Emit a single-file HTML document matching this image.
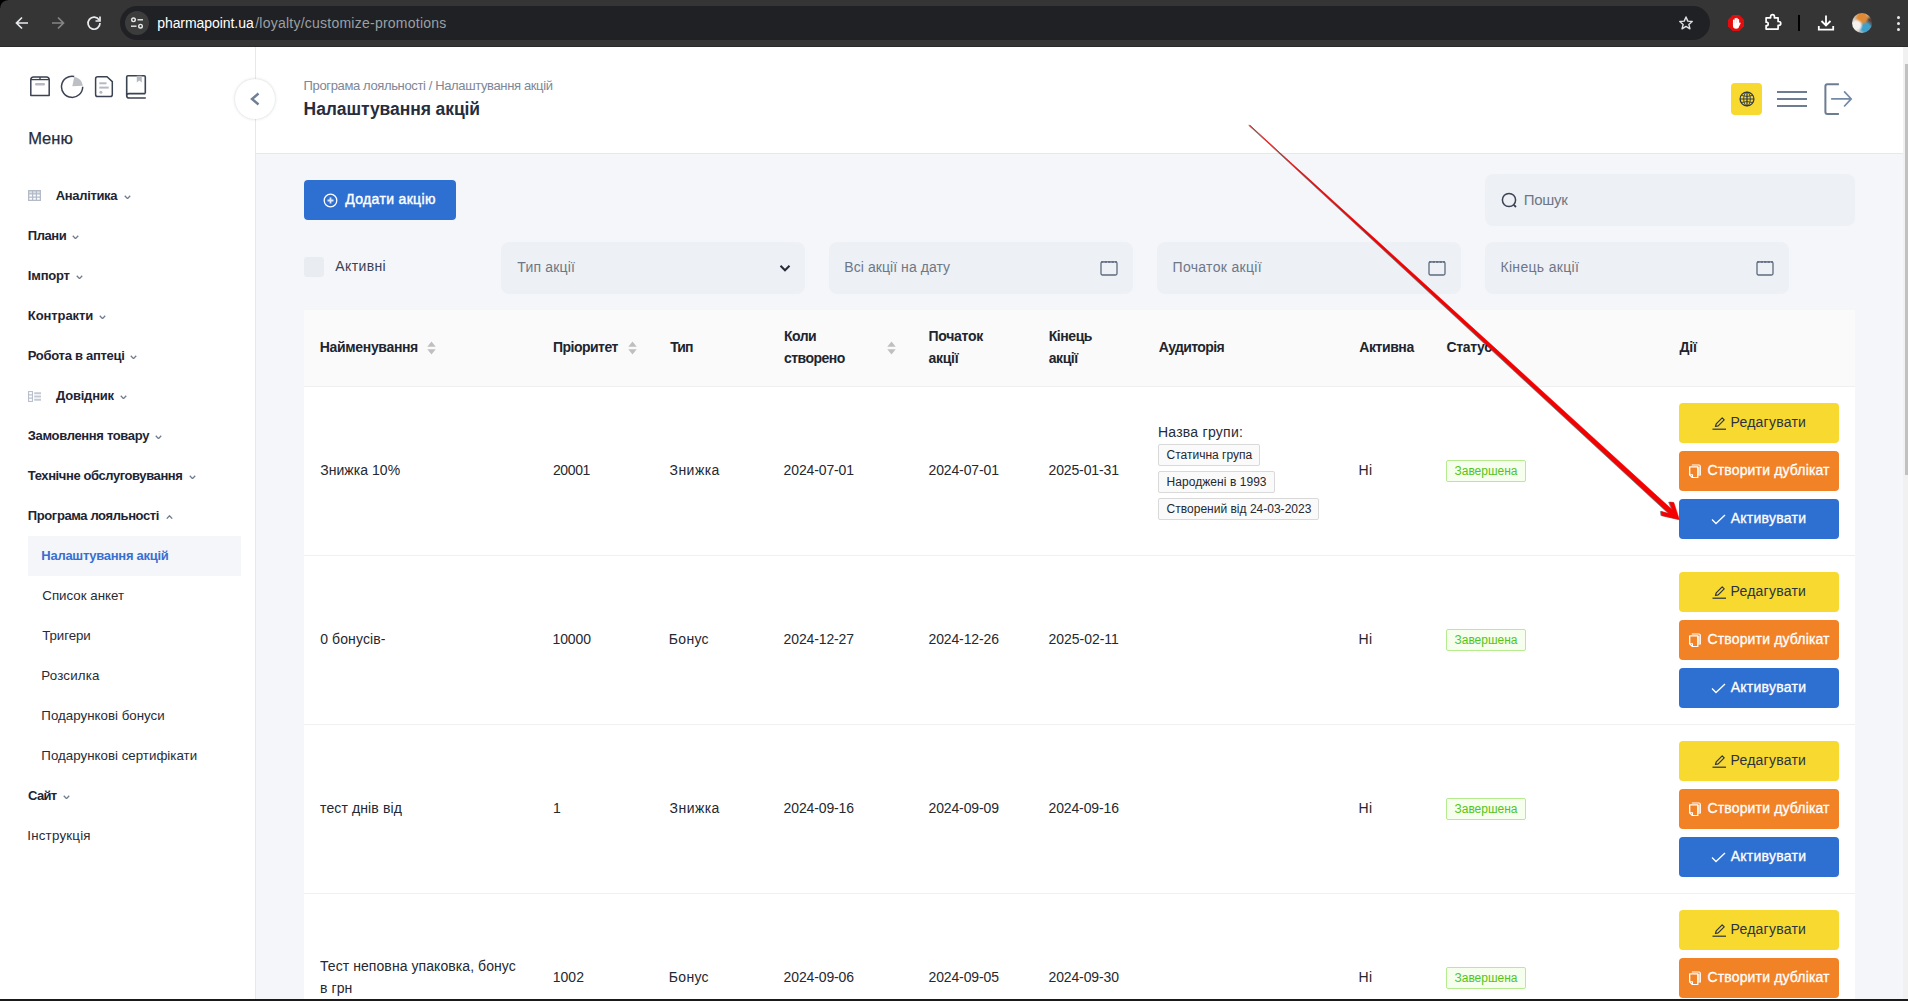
<!DOCTYPE html><html lang="uk"><head><meta charset="utf-8"><title>Налаштування акцій</title><style>
*{box-sizing:border-box;margin:0;padding:0}
html,body{width:1908px;height:1001px;overflow:hidden;background:#f5f6fa;font-family:"Liberation Sans",sans-serif;color:#262b36}
.abs{position:absolute}
.t{position:absolute;white-space:nowrap;line-height:1}
#chrome{position:absolute;left:0;top:0;width:1908px;height:47px;background:#353535;border-bottom:1px solid #2a2a2a}
#pill{position:absolute;left:120px;top:6px;width:1590px;height:34px;border-radius:17px;background:#202124}
#side{position:absolute;left:0;top:47px;width:256px;height:954px;background:#fff;border-right:1px solid #e4e9f0}
#head{position:absolute;left:256px;top:47px;width:1647px;height:107px;background:#fff;border-bottom:1px solid #e4e9f0}
.mi{position:absolute;font-size:13px;font-weight:700;color:#1e2433;white-space:nowrap;line-height:16px;height:16px}
.sub{position:absolute;left:42px;font-size:13.3px;color:#262b36;white-space:nowrap;line-height:16px}
.inp{position:absolute;height:52px;border-radius:8px;background:#edf0f5}
.inp .ph{position:absolute;left:16px;top:17px;font-size:14px;line-height:16px;color:#6e7787;white-space:nowrap}
.cal{position:absolute;right:15px;top:17.500px}
.th{position:absolute;font-size:14px;font-weight:700;color:#20252f;line-height:22px;white-space:nowrap}
.row{position:absolute;left:304px;width:1551px;height:169px;background:#fff;border-bottom:1px solid #f0f0f0}
.c{position:absolute;top:0;height:166px;display:flex;align-items:center;font-size:14px;color:#25282f;line-height:22px;white-space:nowrap}
.btn{position:absolute;left:1375px;width:160px;height:40px;border-radius:4px;font-size:14px;line-height:16px;white-space:nowrap}
.btn svg{position:absolute}
.btn span{position:absolute;top:11px}
.by{background:#f8d930;color:#2b3240}
.bo{background:#f28226;color:#fff;-webkit-text-stroke:.3px #fff}
.bb{background:#2e70d2;color:#fff;-webkit-text-stroke:.3px #fff}
.tag{position:absolute;height:22px;border:1px solid #d9d9d9;border-radius:2px;background:#fafafa;font-size:12px;line-height:20px;padding:0 7px;color:#25282f;white-space:nowrap}
.st{height:22px;border:1px solid #b7eb8f;background:#f6ffed;color:#52c41a;font-size:12px;line-height:20px;padding:0 7px;border-radius:2px;margin-top:2px}
</style></head><body>
<div id="chrome">
<div id="pill"></div>
<div class="abs" style="left:0;top:0;width:8px;height:8px;background:radial-gradient(circle at 8px 8px,rgba(0,0,0,0) 7.200px,#000 8.200px)"></div>
<svg class="abs" style="left:14px;top:15px" width="16" height="16" viewBox="0 0 16 16"><path d="M14 8H3M8 2.500L2.5 8L8 13.5" fill="none" stroke="#e8eaed" stroke-width="1.7"/></svg>
<svg class="abs" style="left:50px;top:15px" width="16" height="16" viewBox="0 0 16 16"><path d="M2 8H13M8 2.500L13.5 8L8 13.5" fill="none" stroke="#858585" stroke-width="1.7"/></svg>
<svg class="abs" style="left:86px;top:15px" width="16" height="16" viewBox="0 0 16 16"><path d="M13.2 5.200A6 6 0 1 0 14 8" fill="none" stroke="#e8eaed" stroke-width="1.7"/><path d="M14 1.500V6H9.5" fill="none" stroke="#e8eaed" stroke-width="1.7"/></svg>
<div class="abs" style="left:125px;top:11px;width:24px;height:24px;border-radius:12px;background:#3c3c3c"></div>
<svg class="abs" style="left:130px;top:16px" width="14" height="14" viewBox="0 0 14 14"><g fill="none" stroke="#e8eaed" stroke-width="1.4"><circle cx="3.5" cy="3.8" r="1.8"/><path d="M7.5 3.800H13"/><circle cx="10.5" cy="10.2" r="1.8"/><path d="M1 10.200H6.5"/></g></svg>
<div class="t" style="left:157px;top:16px;font-size:14px;color:#9aa0a6"><span id="u1" style="letter-spacing:-0.062px;margin-left:0.20px;color:#fff;">pharmapoint.ua</span><span id="u2" style="letter-spacing:0.239px;margin-left:1.60px;">/loyalty/customize-promotions</span></div>
<svg class="abs" style="left:1678px;top:15px" width="16" height="16" viewBox="0 0 18 18"><path d="M9 2.200l2 4.7 5 .4-3.8 3.3 1.2 4.900L9 12.900l-4.4 2.6 1.2-4.900L2 7.300l5-.4z" fill="none" stroke="#dfe1e5" stroke-width="1.6" stroke-linejoin="round"/></svg>
<svg class="abs" style="left:1727px;top:14px" width="18" height="18" viewBox="0 0 18 18"><path d="M5.7 1h6.600L17 5.700v6.600L12.3 17H5.700L1 12.300V5.700z" fill="#e40d0d"/><g stroke="#fff" stroke-width="1.5" stroke-linecap="round" fill="none"><path d="M6.7 6.300V10M8.3 4.700V10M9.9 4.500V10M11.4 5.700V10"/><path d="M12.8 9.300L11.6 11.5" stroke-width="1.6"/></g><path d="M5.950 9H12.150V11.500Q12.150 14.7 9.2 14.700Q5.950 14.7 5.950 11.500Z" fill="#fff"/></svg>
<svg class="abs" style="left:1763px;top:13px" width="20" height="20" viewBox="0 0 20 20"><path d="M3.1 4.800H7.600V3.450a1.9 1.9 0 0 1 3.8 0V4.800H15.100V8.500h.75a1.9 1.9 0 0 1 0 3.800H15.100V16.100H3.100V12.600h.4a1.7 1.7 0 0 0 0-3.400H3.100Z" fill="none" stroke="#fff" stroke-width="1.7" stroke-linejoin="round"/></svg>
<div class="abs" style="left:1798px;top:15px;width:2px;height:16px;background:#000"></div>
<svg class="abs" style="left:1817px;top:14px" width="18" height="18" viewBox="0 0 18 18"><path d="M9 1.500V11M4.5 7L9 11.500L13.5 7M1.8 12v3.700h14.400V12" fill="none" stroke="#fff" stroke-width="1.8"/></svg>
<div class="abs" style="left:1852px;top:13px;width:20px;height:20px;border-radius:10px;background:radial-gradient(circle at 22% 62%,#f4f1ee 0,#f4f1ee 18%,rgba(244,241,238,0) 34%),radial-gradient(circle at 50% 24%,#e08a36 0,#e08a36 22%,rgba(224,138,54,0) 42%),radial-gradient(circle at 68% 72%,#3fa0cc 0,#3fa0cc 20%,rgba(63,160,204,0) 40%),radial-gradient(circle at 88% 45%,#5a4034 0,#5a4034 14%,rgba(90,64,52,0) 34%),#cfc6bc"></div>
<div class="abs" style="left:1896.500px;top:15.5px;width:3px;height:3px;border-radius:2px;background:#e8eaed"></div>
<div class="abs" style="left:1896.500px;top:21.5px;width:3px;height:3px;border-radius:2px;background:#e8eaed"></div>
<div class="abs" style="left:1896.500px;top:27.5px;width:3px;height:3px;border-radius:2px;background:#e8eaed"></div>
</div>
<div id="side">
<svg class="abs" style="left:29px;top:28px" width="22" height="22" viewBox="0 0 22 22"><path d="M1.8 4.800Q1.8 2 4.6 2H17.400Q20.2 2 20.2 4.800V20.500H1.800Z" fill="none" stroke="#3b4252" stroke-width="1.5" stroke-linejoin="round"/><path d="M1.8 4.600H20.2" stroke="#3b4252" stroke-width="1.3"/><path d="M11 2V4.6" stroke="#3b4252" stroke-width="1.3"/><rect x="6" y="7.9" width="10" height="2.6" rx="1.3" fill="#b5b9c1"/></svg>
<svg class="abs" style="left:60px;top:28px" width="24" height="24" viewBox="0 0 24 24"><path d="M14.3 1.700L12.3 11.200L22.9 10.800A10.8 10.8 0 0 0 14.3 1.700Z" fill="#bdbfc5"/><path d="M14.2 1.400A10.6 10.6 0 1 0 22.7 11.8" fill="none" stroke="#3b4252" stroke-width="1.5"/></svg>
<svg class="abs" style="left:94px;top:28px" width="20" height="23" viewBox="0 0 20 23"><path d="M3.7 1.800H13L18.3 6.600V19.500Q18.3 21.6 16.2 21.600H3.700Q1.6 21.6 1.6 19.500V3.900Q1.6 1.8 3.7 1.800Z" fill="none" stroke="#3b4252" stroke-width="1.5"/><rect x="5.3" y="7.3" width="7.2" height="2" fill="#b5b9c1"/><rect x="5.3" y="11.6" width="9.4" height="2" fill="#b5b9c1"/><circle cx="6.9" cy="17.3" r="1.5" fill="#b5b9c1"/></svg>
<svg class="abs" style="left:125px;top:27px" width="22" height="25" viewBox="0 0 22 25"><path d="M20.3 19.600V3Q20.3 1.7 19 1.700H3Q1.7 1.7 1.7 3V21.700Q1.7 24 4.2 24H20.800M20.3 19.600H4Q1.7 19.6 1.7 21.7" fill="none" stroke="#3b4252" stroke-width="1.6"/><path d="M11.8 1.700V8.600L14.3 6.400L16.8 8.600V1.700Z" fill="#b5b9c1"/></svg>
<div class="t" style="left:28px;top:83px;font-size:16.500px;color:#262d3d;-webkit-text-stroke:.25px #262d3d"><span id="menu" style="letter-spacing:0.000px;margin-left:0.20px;">Меню</span></div>
<svg class="abs" style="left:28px;top:143px" width="13" height="11" viewBox="0 0 13 11"><rect x=".65" y=".65" width="11.7" height="3.2" fill="#dde1e9"/><g fill="none" stroke="#b3bac8" stroke-width="1.3"><rect x=".65" y=".65" width="11.7" height="9.7"/><path d="M.650 3.900H12.350M.650 7.100H12.350M4.6 .65V10.350M8.4 .65V10.350"/></g></svg>
<div class="mi" style="left:56px;top:141px"><span id="m0" style="letter-spacing:-0.350px;margin-left:-0.20px;">Аналітика</span></div>
<svg class="abs" style="left:124.2px;top:148px" width="7" height="4.4" viewBox="0 0 6.4 4"><path d="M0.7 0.7 L3.2 3.3 L5.7 0.7" fill="none" stroke="#6f7b8e" stroke-width="1.2"/></svg>
<div class="mi" style="left:28px;top:181px"><span id="m1" style="letter-spacing:-0.425px;margin-left:-0.20px;">Плани</span></div>
<svg class="abs" style="left:71.7px;top:188px" width="7" height="4.4" viewBox="0 0 6.4 4"><path d="M0.7 0.7 L3.2 3.3 L5.7 0.7" fill="none" stroke="#6f7b8e" stroke-width="1.2"/></svg>
<div class="mi" style="left:28px;top:221px"><span id="m2" style="letter-spacing:-0.200px;margin-left:-0.20px;">Імпорт</span></div>
<svg class="abs" style="left:75.8px;top:228px" width="7" height="4.4" viewBox="0 0 6.4 4"><path d="M0.7 0.7 L3.2 3.3 L5.7 0.7" fill="none" stroke="#6f7b8e" stroke-width="1.2"/></svg>
<div class="mi" style="left:28px;top:261px"><span id="m3" style="letter-spacing:-0.088px;margin-left:-0.20px;">Контракти</span></div>
<svg class="abs" style="left:99.4px;top:268px" width="7" height="4.4" viewBox="0 0 6.4 4"><path d="M0.7 0.7 L3.2 3.3 L5.7 0.7" fill="none" stroke="#6f7b8e" stroke-width="1.2"/></svg>
<div class="mi" style="left:28px;top:301px"><span id="m4" style="letter-spacing:-0.286px;margin-left:-0.20px;">Робота в аптеці</span></div>
<svg class="abs" style="left:129.8px;top:308px" width="7" height="4.4" viewBox="0 0 6.4 4"><path d="M0.7 0.7 L3.2 3.3 L5.7 0.7" fill="none" stroke="#6f7b8e" stroke-width="1.2"/></svg>
<svg class="abs" style="left:28px;top:344px" width="13" height="11" viewBox="0 0 13 11"><g fill="none" stroke="#b9c0cd" stroke-width="1.1"><rect x=".55" y=".55" width="3.9" height="9.9"/><path d="M.550 3.900H4.450M.550 7.100H4.450"/></g><path d="M6.2 2.300H13M6.2 5.500H13M6.2 8.700H13" stroke="#c3c9d4" stroke-width="2"/></svg>
<div class="mi" style="left:56px;top:341px"><span id="m5" style="letter-spacing:-0.214px;margin-left:0.00px;">Довідник</span></div>
<svg class="abs" style="left:119.7px;top:348px" width="7" height="4.4" viewBox="0 0 6.4 4"><path d="M0.7 0.7 L3.2 3.3 L5.7 0.7" fill="none" stroke="#6f7b8e" stroke-width="1.2"/></svg>
<div class="mi" style="left:28px;top:381px"><span id="m6" style="letter-spacing:-0.338px;margin-left:-0.20px;">Замовлення товару</span></div>
<svg class="abs" style="left:155.0px;top:388px" width="7" height="4.4" viewBox="0 0 6.4 4"><path d="M0.7 0.7 L3.2 3.3 L5.7 0.7" fill="none" stroke="#6f7b8e" stroke-width="1.2"/></svg>
<div class="mi" style="left:28px;top:421px"><span id="m7" style="letter-spacing:-0.409px;margin-left:-0.20px;">Технічне обслуговування</span></div>
<svg class="abs" style="left:189.0px;top:428px" width="7" height="4.4" viewBox="0 0 6.4 4"><path d="M0.7 0.7 L3.2 3.3 L5.7 0.7" fill="none" stroke="#6f7b8e" stroke-width="1.2"/></svg>
<div class="mi" style="left:28px;top:461px"><span id="m8" style="letter-spacing:-0.389px;margin-left:-0.20px;">Програма лояльності</span></div>
<svg class="abs" style="left:165.8px;top:468px" width="7" height="4.4" viewBox="0 0 6.4 4"><path d="M0.7 3.3 L3.2 0.7 L5.7 3.3" fill="none" stroke="#6f7b8e" stroke-width="1.2"/></svg>
<div class="abs" style="left:28px;top:489px;width:213px;height:40px;background:#f5f6fa"></div>
<div class="sub" style="top:501px;font-weight:700;color:#3a6fd0;font-size:13px"><span id="s0" style="letter-spacing:-0.271px;margin-left:-0.70px;">Налаштування акцій</span></div>
<div class="sub" style="top:541px;"><span id="s1" style="letter-spacing:0.000px;margin-left:0.30px;">Список анкет</span></div>
<div class="sub" style="top:581px;"><span id="s2" style="letter-spacing:-0.100px;margin-left:0.30px;">Тригери</span></div>
<div class="sub" style="top:621px;"><span id="s3" style="letter-spacing:0.186px;margin-left:-0.70px;">Розсилка</span></div>
<div class="sub" style="top:661px;"><span id="s4" style="letter-spacing:0.018px;margin-left:-0.70px;">Подарункові бонуси</span></div>
<div class="sub" style="top:701px;"><span id="s5" style="letter-spacing:0.018px;margin-left:-0.70px;">Подарункові сертифікати</span></div>
<div class="mi" style="left:28px;top:741px"><span id="m9" style="letter-spacing:-0.633px;margin-left:0.00px;">Сайт</span></div>
<svg class="abs" style="left:63.0px;top:748px" width="7" height="4.4" viewBox="0 0 6.4 4"><path d="M0.7 0.7 L3.2 3.3 L5.7 0.7" fill="none" stroke="#6f7b8e" stroke-width="1.2"/></svg>
<div class="sub" style="left:28px;top:781px"><span id="s6" style="letter-spacing:0.233px;margin-left:-0.80px;">Інструкція</span></div>
</div>
<div id="head">
<div class="t" style="left:48px;top:32px;font-size:13px;color:#7d8797"><span id="bc" style="letter-spacing:-0.369px;margin-left:-0.40px;">Програма лояльності / Налаштування акцій</span></div>
<div class="t" style="left:48px;top:54px;font-size:17.500px;font-weight:700;color:#262d3d"><span id="ttl" style="letter-spacing:-0.082px;margin-left:-0.40px;">Налаштування акцій</span></div>
<div class="abs" style="left:1475px;top:36px;width:31px;height:32px;border-radius:4px;background:#f8d930"></div>
<svg class="abs" style="left:1482.600px;top:43.500px" width="16" height="16" viewBox="0 0 16 16"><g fill="none" stroke="#2f3a4d"><circle cx="8" cy="8" r="6.9" stroke-width="1.3"/><path d="M8 1V15M1 8H15" stroke-width="1.2"/><ellipse cx="8" cy="8" rx="3.3" ry="6.9" stroke-width=".9"/><path d="M2.3 4.400Q8 6.6 13.7 4.400M2.3 11.600Q8 9.4 13.7 11.6" stroke-width=".9"/></g></svg>
<div class="abs" style="left:1521px;top:44px;width:30px;height:2px;background:#6d7c91"></div>
<div class="abs" style="left:1521px;top:51px;width:30px;height:2px;background:#6d7c91"></div>
<div class="abs" style="left:1521px;top:58px;width:30px;height:2px;background:#6d7c91"></div>
<svg class="abs" style="left:1566px;top:35px" width="32" height="34" viewBox="0 0 32 34"><path d="M16.9 2.200H5.400Q3.4 2.2 3.4 4.200V29.900Q3.4 31.9 5.4 31.900H16.9" fill="none" stroke="#6d7c91" stroke-width="2"/><path d="M9.1 16.900H28.600M22.1 9.400L29.2 16.900L22.1 24.5" fill="none" stroke="#7589a6" stroke-width="1.7"/></svg>
</div>
<div class="abs" style="left:235px;top:79px;width:40px;height:40px;border-radius:20px;background:#fff;box-shadow:0 0 3px rgba(60,70,90,.26)"></div>
<svg class="abs" style="left:249px;top:92px" width="12" height="14" viewBox="0 0 12 14"><path d="M9.5 1.500L3 7L9.5 12.5" fill="none" stroke="#6f7f95" stroke-width="2.4"/></svg>
<div class="abs" style="left:304px;top:180px;width:152px;height:40px;border-radius:4px;background:#2e70d2"></div>
<svg class="abs" style="left:323px;top:192.500px" width="15" height="15" viewBox="0 0 15 15"><circle cx="7.5" cy="7.5" r="6.3" fill="none" stroke="#fff" stroke-width="1.3"/><path d="M7.5 4.500V10.500M4.5 7.500H10.5" stroke="#dfe9fb" stroke-width="1.8"/></svg>
<div class="t" style="left:345px;top:191px;font-size:14px;color:#fff;line-height:16px;-webkit-text-stroke:.4px #fff"><span id="add" style="letter-spacing:0.336px;margin-left:0.30px;">Додати акцію</span></div>
<div class="inp" style="left:1485px;top:174px;width:370px"><svg class="abs" style="left:16px;top:18px" width="17" height="17" viewBox="0 0 17 17"><circle cx="8" cy="8" r="6.6" fill="none" stroke="#3b4252" stroke-width="1.5"/><path d="M12.8 12.800L15 15" stroke="#3b4252" stroke-width="1.8"/></svg><div class="ph" style="left:39px;top:18px;font-size:15px"><span id="srch" style="letter-spacing:-0.250px;margin-left:-0.30px;">Пошук</span></div></div>
<div class="abs" style="left:304px;top:257px;width:20px;height:20px;border-radius:3px;background:#e9edf2"></div>
<div class="t" style="left:335px;top:258px;font-size:14px;color:#3a4254;line-height:16px"><span id="act" style="letter-spacing:0.383px;margin-left:0.30px;">Активні</span></div>
<div class="inp" style="left:501px;top:242px;width:304px"><div class="ph"><span id="f0" style="letter-spacing:0.175px;margin-left:0.30px;">Тип акції</span></div><svg class="abs" style="right:14px;top:22px" width="12" height="9" viewBox="0 0 12 9"><path d="M1.5 1.800L6 6.300L10.5 1.8" fill="none" stroke="#262b36" stroke-width="2"/></svg></div>
<div class="inp" style="left:829px;top:242px;width:304px"><div class="ph"><span id="f1" style="letter-spacing:0.062px;margin-left:-0.70px;">Всі акції на дату</span></div><svg class="cal" width="18" height="16" viewBox="0 0 18 16"><rect x="1" y="1.8" width="16" height="13.2" rx="1.5" fill="none" stroke="#5d6a7e" stroke-width="1.3"/><path d="M1 2H17" stroke="#5d6a7e" stroke-width="1.7" stroke-dasharray="2.5 1"/></svg></div>
<div class="inp" style="left:1157px;top:242px;width:304px"><div class="ph"><span id="f2" style="letter-spacing:0.325px;margin-left:-0.50px;">Початок акції</span></div><svg class="cal" width="18" height="16" viewBox="0 0 18 16"><rect x="1" y="1.8" width="16" height="13.2" rx="1.5" fill="none" stroke="#5d6a7e" stroke-width="1.3"/><path d="M1 2H17" stroke="#5d6a7e" stroke-width="1.7" stroke-dasharray="2.5 1"/></svg></div>
<div class="inp" style="left:1485px;top:242px;width:304px"><div class="ph"><span id="f3" style="letter-spacing:0.327px;margin-left:-0.60px;">Кінець акції</span></div><svg class="cal" width="18" height="16" viewBox="0 0 18 16"><rect x="1" y="1.8" width="16" height="13.2" rx="1.5" fill="none" stroke="#5d6a7e" stroke-width="1.3"/><path d="M1 2H17" stroke="#5d6a7e" stroke-width="1.7" stroke-dasharray="2.5 1"/></svg></div>
<div class="abs" style="left:304px;top:310px;width:1551px;height:77px;background:#fafafa;border-bottom:1px solid #f0f0f0"></div>
<div class="th" style="left:320px;top:336px"><span id="h0" style="letter-spacing:-0.336px;margin-left:-0.20px;display:inline-block;">Найменування</span></div>
<div class="th" style="left:553px;top:336px"><span id="h1" style="letter-spacing:-0.525px;margin-left:0.00px;display:inline-block;">Пріоритет</span></div>
<div class="th" style="left:670px;top:336px"><span id="h2" style="letter-spacing:-0.950px;margin-left:0.30px;display:inline-block;">Тип</span></div>
<div class="th" style="left:784px;top:325px"><span id="h3" style="letter-spacing:-0.514px;margin-left:0.00px;display:inline-block;">Коли<br>створено</span></div>
<div class="th" style="left:928px;top:325px"><span id="h4" style="letter-spacing:-0.267px;margin-left:0.50px;display:inline-block;">Початок<br>акції</span></div>
<div class="th" style="left:1048px;top:325px"><span id="h5" style="letter-spacing:-0.420px;margin-left:0.70px;display:inline-block;">Кінець<br>акції</span></div>
<div class="th" style="left:1158px;top:336px"><span id="h6" style="letter-spacing:-0.613px;margin-left:0.70px;display:inline-block;">Аудиторія</span></div>
<div class="th" style="left:1359px;top:336px"><span id="h7" style="letter-spacing:-0.400px;margin-left:0.20px;display:inline-block;">Активна</span></div>
<div class="th" style="left:1446px;top:336px"><span id="h8" style="letter-spacing:-0.360px;margin-left:0.60px;display:inline-block;">Статус</span></div>
<div class="th" style="left:1679px;top:336px"><span id="h9" style="letter-spacing:-0.100px;margin-left:0.40px;display:inline-block;">Дії</span></div>
<svg class="abs" style="left:426.8px;top:341px" width="9" height="14" viewBox="0 0 9 14"><path d="M4.5 .5L8.7 5.800H.300Z" fill="#bfbfbf"/><path d="M4.5 13.500L8.7 8.200H.300Z" fill="#bfbfbf"/></svg>
<svg class="abs" style="left:627.5px;top:341px" width="9" height="14" viewBox="0 0 9 14"><path d="M4.5 .5L8.7 5.800H.300Z" fill="#bfbfbf"/><path d="M4.5 13.500L8.7 8.200H.300Z" fill="#bfbfbf"/></svg>
<svg class="abs" style="left:886.5px;top:341px" width="9" height="14" viewBox="0 0 9 14"><path d="M4.5 .5L8.7 5.800H.300Z" fill="#bfbfbf"/><path d="M4.5 13.500L8.7 8.200H.300Z" fill="#bfbfbf"/></svg>
<div class="row" style="top:387px">
<div class="c" style="left:16px"><span id="r0c0" style="letter-spacing:0.044px;margin-left:0.20px;display:inline-block;">Знижка 10%</span></div>
<div class="c" style="left:249px"><span id="r0c1" style="letter-spacing:-0.375px;margin-left:-0.10px;display:inline-block;">20001</span></div>
<div class="c" style="left:366px"><span id="r0c2" style="letter-spacing:0.460px;margin-left:-0.50px;display:inline-block;">Знижка</span></div>
<div class="c" style="left:480px"><span id="r0c3" style="letter-spacing:-0.133px;margin-left:-0.40px;display:inline-block;">2024-07-01</span></div>
<div class="c" style="left:624px"><span id="r0c4" style="letter-spacing:-0.133px;margin-left:0.50px;display:inline-block;">2024-07-01</span></div>
<div class="c" style="left:744px"><span id="r0c5" style="letter-spacing:-0.133px;margin-left:0.50px;display:inline-block;">2025-01-31</span></div>
<div class="t" style="left:854px;top:37px;font-size:14px;line-height:16px;color:#262b36"><span id="aud" style="letter-spacing:0.255px;margin-left:-0.10px;">Назва групи:</span></div>
<div class="tag" style="left:854px;top:57px"><span id="tag0" style="letter-spacing:0.000px;margin-left:0.60px;">Статична група</span></div>
<div class="tag" style="left:854px;top:84px"><span id="tag1" style="letter-spacing:0.053px;margin-left:0.60px;">Народжені в 1993</span></div>
<div class="tag" style="left:854px;top:111px"><span id="tag2" style="letter-spacing:0.009px;margin-left:0.60px;">Створений від 24-03-2023</span></div>
<div class="c" style="left:1055px"><span id="ni0" style="letter-spacing:0.500px;margin-left:-0.50px;">Ні</span></div>
<div class="c" style="left:1142px"><span class="st"><span id="st0" style="letter-spacing:-0.013px;margin-left:0.50px;">Завершена</span></span></div>
<div class="btn by" style="top:16px"><svg style="left:33px;top:13px" width="15" height="14" viewBox="0 0 15 14"><path d="M.500 13.200H14" stroke="#2b3240" stroke-width="1.2"/><path d="M3.5 10.500L4.2 7.800L10.2 1.800L12.2 3.800L6.2 9.800Z" fill="none" stroke="#2b3240" stroke-width="1.2" stroke-linejoin="round"/></svg><span id="ed0" style="letter-spacing:0.233px;margin-left:-0.50px;left:52px;">Редагувати</span></div>
<div class="btn bo" style="top:64px"><svg style="left:10px;top:12.500px" width="12" height="14.5" viewBox="0 0 12 14.5"><path d="M2.8 1H10Q11.3 1 11.3 2.300V11.5" fill="none" stroke="#fff" stroke-width="1.2"/><path d="M8.8 2.900V11.700H11V2.500Z" fill="#fbd3b0" stroke="none"/><path d="M8.8 2.900V13.600H3.400L.700 10.900V2.900Z" fill="none" stroke="#fff" stroke-width="1.3" stroke-linejoin="round"/><path d="M.700 10.700H3.500V13.5" fill="none" stroke="#fff" stroke-width="1.1"/></svg><span id="du0" style="letter-spacing:0.150px;margin-left:0.50px;left:28px;">Створити дублікат</span></div>
<div class="btn bb" style="top:112px"><svg style="left:32px;top:14.500px" width="15" height="11" viewBox="0 0 15 11"><path d="M1 5.500L5 9.500L14 1" fill="none" stroke="#fff" stroke-width="1.3"/></svg><span id="av0" style="letter-spacing:0.267px;margin-left:0.70px;left:51px;">Активувати</span></div>
</div>
<div class="row" style="top:556px">
<div class="c" style="left:16px"><span id="r1c0" style="letter-spacing:0.111px;margin-left:0.20px;display:inline-block;">0 бонусів-</span></div>
<div class="c" style="left:249px"><span id="r1c1" style="letter-spacing:-0.125px;margin-left:-0.50px;display:inline-block;">10000</span></div>
<div class="c" style="left:366px"><span id="r1c2" style="letter-spacing:0.300px;margin-left:-1.20px;display:inline-block;">Бонус</span></div>
<div class="c" style="left:480px"><span id="r1c3" style="letter-spacing:-0.133px;margin-left:-0.40px;display:inline-block;">2024-12-27</span></div>
<div class="c" style="left:624px"><span id="r1c4" style="letter-spacing:-0.133px;margin-left:0.50px;display:inline-block;">2024-12-26</span></div>
<div class="c" style="left:744px"><span id="r1c5" style="letter-spacing:-0.022px;margin-left:0.50px;display:inline-block;">2025-02-11</span></div>
<div class="c" style="left:1055px"><span id="ni1" style="letter-spacing:0.500px;margin-left:-0.50px;">Ні</span></div>
<div class="c" style="left:1142px"><span class="st"><span id="st1" style="letter-spacing:-0.013px;margin-left:0.50px;">Завершена</span></span></div>
<div class="btn by" style="top:16px"><svg style="left:33px;top:13px" width="15" height="14" viewBox="0 0 15 14"><path d="M.500 13.200H14" stroke="#2b3240" stroke-width="1.2"/><path d="M3.5 10.500L4.2 7.800L10.2 1.800L12.2 3.800L6.2 9.800Z" fill="none" stroke="#2b3240" stroke-width="1.2" stroke-linejoin="round"/></svg><span id="ed1" style="letter-spacing:0.233px;margin-left:-0.50px;left:52px;">Редагувати</span></div>
<div class="btn bo" style="top:64px"><svg style="left:10px;top:12.500px" width="12" height="14.5" viewBox="0 0 12 14.5"><path d="M2.8 1H10Q11.3 1 11.3 2.300V11.5" fill="none" stroke="#fff" stroke-width="1.2"/><path d="M8.8 2.900V11.700H11V2.500Z" fill="#fbd3b0" stroke="none"/><path d="M8.8 2.900V13.600H3.400L.700 10.900V2.900Z" fill="none" stroke="#fff" stroke-width="1.3" stroke-linejoin="round"/><path d="M.700 10.700H3.500V13.5" fill="none" stroke="#fff" stroke-width="1.1"/></svg><span id="du1" style="letter-spacing:0.150px;margin-left:0.50px;left:28px;">Створити дублікат</span></div>
<div class="btn bb" style="top:112px"><svg style="left:32px;top:14.500px" width="15" height="11" viewBox="0 0 15 11"><path d="M1 5.500L5 9.500L14 1" fill="none" stroke="#fff" stroke-width="1.3"/></svg><span id="av1" style="letter-spacing:0.267px;margin-left:0.70px;left:51px;">Активувати</span></div>
</div>
<div class="row" style="top:725px">
<div class="c" style="left:16px"><span id="r2c0" style="letter-spacing:0.125px;margin-left:0.00px;display:inline-block;">тест днів від</span></div>
<div class="c" style="left:249px"><span id="r2c1" style="display:inline-block;">1</span></div>
<div class="c" style="left:366px"><span id="r2c2" style="letter-spacing:0.440px;margin-left:-0.40px;display:inline-block;">Знижка</span></div>
<div class="c" style="left:480px"><span id="r2c3" style="letter-spacing:-0.133px;margin-left:-0.40px;display:inline-block;">2024-09-16</span></div>
<div class="c" style="left:624px"><span id="r2c4" style="letter-spacing:-0.133px;margin-left:0.50px;display:inline-block;">2024-09-09</span></div>
<div class="c" style="left:744px"><span id="r2c5" style="letter-spacing:-0.133px;margin-left:0.50px;display:inline-block;">2024-09-16</span></div>
<div class="c" style="left:1055px"><span id="ni2" style="letter-spacing:0.500px;margin-left:-0.50px;">Ні</span></div>
<div class="c" style="left:1142px"><span class="st"><span id="st2" style="letter-spacing:-0.013px;margin-left:0.50px;">Завершена</span></span></div>
<div class="btn by" style="top:16px"><svg style="left:33px;top:13px" width="15" height="14" viewBox="0 0 15 14"><path d="M.500 13.200H14" stroke="#2b3240" stroke-width="1.2"/><path d="M3.5 10.500L4.2 7.800L10.2 1.800L12.2 3.800L6.2 9.800Z" fill="none" stroke="#2b3240" stroke-width="1.2" stroke-linejoin="round"/></svg><span id="ed2" style="letter-spacing:0.233px;margin-left:-0.50px;left:52px;">Редагувати</span></div>
<div class="btn bo" style="top:64px"><svg style="left:10px;top:12.500px" width="12" height="14.5" viewBox="0 0 12 14.5"><path d="M2.8 1H10Q11.3 1 11.3 2.300V11.5" fill="none" stroke="#fff" stroke-width="1.2"/><path d="M8.8 2.900V11.700H11V2.500Z" fill="#fbd3b0" stroke="none"/><path d="M8.8 2.900V13.600H3.400L.700 10.900V2.900Z" fill="none" stroke="#fff" stroke-width="1.3" stroke-linejoin="round"/><path d="M.700 10.700H3.500V13.5" fill="none" stroke="#fff" stroke-width="1.1"/></svg><span id="du2" style="letter-spacing:0.150px;margin-left:0.50px;left:28px;">Створити дублікат</span></div>
<div class="btn bb" style="top:112px"><svg style="left:32px;top:14.500px" width="15" height="11" viewBox="0 0 15 11"><path d="M1 5.500L5 9.500L14 1" fill="none" stroke="#fff" stroke-width="1.3"/></svg><span id="av2" style="letter-spacing:0.267px;margin-left:0.70px;left:51px;">Активувати</span></div>
</div>
<div class="row" style="top:894px">
<div class="c" style="left:16px"><span id="r3c0" style="letter-spacing:0.070px;margin-left:0.00px;display:inline-block;">Тест неповна упаковка, бонус<br>в грн</span></div>
<div class="c" style="left:249px"><span id="r3c1" style="letter-spacing:0.033px;margin-left:-0.30px;display:inline-block;">1002</span></div>
<div class="c" style="left:366px"><span id="r3c2" style="letter-spacing:0.300px;margin-left:-1.20px;display:inline-block;">Бонус</span></div>
<div class="c" style="left:480px"><span id="r3c3" style="letter-spacing:-0.133px;margin-left:-0.40px;display:inline-block;">2024-09-06</span></div>
<div class="c" style="left:624px"><span id="r3c4" style="letter-spacing:-0.133px;margin-left:0.50px;display:inline-block;">2024-09-05</span></div>
<div class="c" style="left:744px"><span id="r3c5" style="letter-spacing:-0.133px;margin-left:0.50px;display:inline-block;">2024-09-30</span></div>
<div class="c" style="left:1055px"><span id="ni3" style="letter-spacing:0.500px;margin-left:-0.50px;">Ні</span></div>
<div class="c" style="left:1142px"><span class="st"><span id="st3" style="letter-spacing:-0.013px;margin-left:0.50px;">Завершена</span></span></div>
<div class="btn by" style="top:16px"><svg style="left:33px;top:13px" width="15" height="14" viewBox="0 0 15 14"><path d="M.500 13.200H14" stroke="#2b3240" stroke-width="1.2"/><path d="M3.5 10.500L4.2 7.800L10.2 1.800L12.2 3.800L6.2 9.800Z" fill="none" stroke="#2b3240" stroke-width="1.2" stroke-linejoin="round"/></svg><span id="ed3" style="letter-spacing:0.233px;margin-left:-0.50px;left:52px;">Редагувати</span></div>
<div class="btn bo" style="top:64px"><svg style="left:10px;top:12.500px" width="12" height="14.5" viewBox="0 0 12 14.5"><path d="M2.8 1H10Q11.3 1 11.3 2.300V11.5" fill="none" stroke="#fff" stroke-width="1.2"/><path d="M8.8 2.900V11.700H11V2.500Z" fill="#fbd3b0" stroke="none"/><path d="M8.8 2.900V13.600H3.400L.700 10.900V2.900Z" fill="none" stroke="#fff" stroke-width="1.3" stroke-linejoin="round"/><path d="M.700 10.700H3.500V13.5" fill="none" stroke="#fff" stroke-width="1.1"/></svg><span id="du3" style="letter-spacing:0.150px;margin-left:0.50px;left:28px;">Створити дублікат</span></div>
<div class="btn bb" style="top:112px"><svg style="left:32px;top:14.500px" width="15" height="11" viewBox="0 0 15 11"><path d="M1 5.500L5 9.500L14 1" fill="none" stroke="#fff" stroke-width="1.3"/></svg><span id="av3" style="letter-spacing:0.267px;margin-left:0.70px;left:51px;">Активувати</span></div>
</div>
<svg class="abs" style="left:0;top:0;filter:drop-shadow(-0.5px 0.8px 0.6px rgba(0,0,0,.55))" width="1908" height="1001" viewBox="0 0 1908 1001"><polygon points="1679.3,519.5 1661.9,515.5 1661.3,511.4 1669.6,513.8 1669.6,513.8 1585.5,436.2 1501.5,358.6 1438.5,300.3 1375.6,242.0 1333.6,203.1 1308.5,179.8 1291.8,164.2 1279.2,152.5 1270.8,144.7 1258.1,133.1 1249.7,125.4 1249.9,125.2 1258.3,132.9 1271.0,144.5 1279.4,152.3 1292.1,163.8 1309.1,179.1 1334.5,202.2 1376.9,240.6 1440.3,298.3 1503.8,356.1 1588.3,433.2 1672.8,510.3 1672.8,510.3 1669.6,502.2 1673.8,502.5" fill="#f40000" stroke="#f40000" stroke-width="0.6" stroke-linejoin="round"/></svg>
<div class="abs" style="left:1903px;top:47px;width:5px;height:954px;background:#f1f1f1"></div>
<div class="abs" style="left:1905px;top:64px;width:3px;height:411px;background:#c1c1c1"></div>
<div class="abs" style="left:0;top:999px;width:1908px;height:2px;background:#1a1a1a"></div>
</body></html>
